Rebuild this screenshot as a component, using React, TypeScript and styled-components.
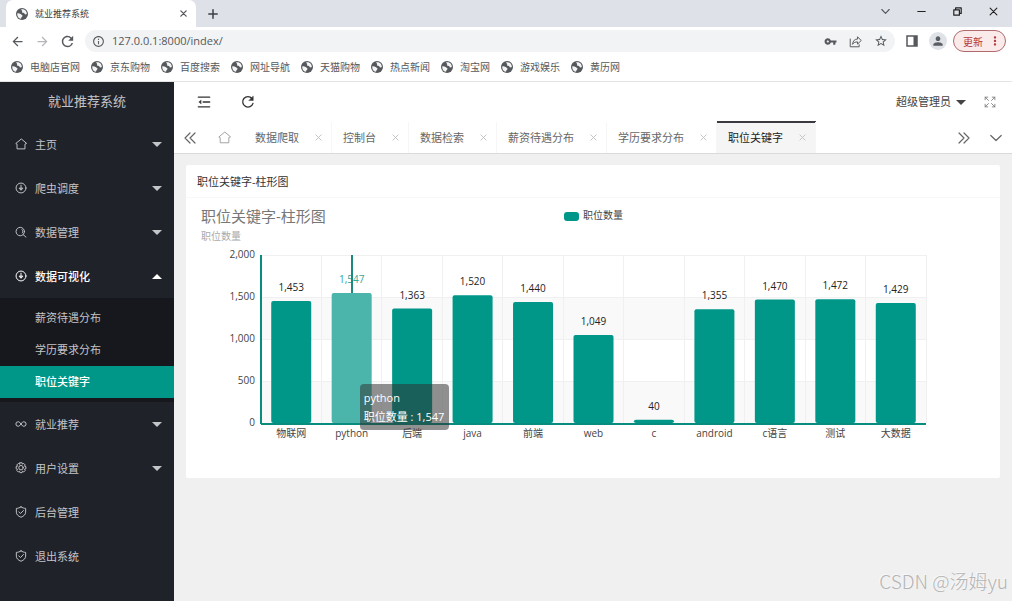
import React, { useLayoutEffect, useRef, useState } from "react";
import styled, { createGlobalStyle } from "styled-components";
import {
  MdArrowBack,
  MdArrowForward,
  MdInfoOutline,
  MdMoreVert,
  MdPerson,
  MdRefresh,
  MdStarBorder,
  MdVpnKey,
} from "react-icons/md";

const TEAL = "#009688";

const GlobalStyle = createGlobalStyle`
  *, *::before, *::after { box-sizing: border-box; }
  body {
    margin: 0;
    font-family: "Open Sans", "Noto Sans CJK SC", sans-serif;
    font-size: 11px;
    color: #333;
    background: #f0f0f0;
  }
  button, input {
    font: inherit;
    color: inherit;
    border: 0;
    padding: 0;
    margin: 0;
    background: none;
  }
  a { color: inherit; text-decoration: none; }
  ul { list-style: none; margin: 0; padding: 0; }
  h1, h2 { margin: 0; font-weight: 400; }
  svg { display: block; flex: none; }
`;

const Page = styled.div`
  position: relative;
  min-height: 100vh;
  display: flex;
  flex-direction: column;
`;

/* ---------- browser chrome ---------- */

const TabStrip = styled.div`
  height: 27px;
  display: flex;
  align-items: center;
  padding-left: 6px;
  background: #dee1e8;
`;

const BrowserTab = styled.div`
  width: 190px;
  height: 27px;
  display: flex;
  align-items: center;
  gap: 6px;
  padding: 0 7px 0 9px;
  border-radius: 7px 7px 0 0;
  background: #fff;
  font-size: 9px;
  color: #3c4043;
`;

const BrowserTabTitle = styled.span`
  flex: 1;
`;

const IconButton = styled.button<{ $w?: number; $color?: string }>`
  width: ${(p) => p.$w ?? 14}px;
  height: 100%;
  display: flex;
  align-items: center;
  justify-content: center;
  flex: none;
  color: ${(p) => p.$color ?? "#55585c"};
`;

const WindowControls = styled.div`
  height: 100%;
  display: flex;
  margin-left: auto;
  padding: 0 1px 4px 0;
`;

const Toolbar = styled.div`
  height: 28px;
  display: flex;
  align-items: center;
  gap: 11px;
  padding: 0 6px 0 10px;
  background: #fff;
`;

const AddressBar = styled.div`
  flex: 1;
  height: 22px;
  display: flex;
  align-items: center;
  gap: 12px;
  padding: 0 7px;
  border-radius: 11px;
  background: #f1f3f4;
`;

const AddressInput = styled.input`
  flex: 1;
  min-width: 0;
  margin-left: -5px;
  padding-bottom: 1px;
  font-size: 11px;
  color: #55585c;
  outline: none;
`;

const ProfileGroup = styled.div`
  display: flex;
  align-items: center;
  gap: 6px;
`;

const Avatar = styled.button`
  width: 18px;
  height: 18px;
  display: flex;
  align-items: center;
  justify-content: center;
  border-radius: 50%;
  background: #dfe2e6;
  color: #5a5d61;
`;

const UpdateButton = styled.button`
  width: 53px;
  height: 22px;
  display: flex;
  align-items: center;
  justify-content: space-between;
  padding: 0 3px 0 9px;
  border: 1px solid #b06a6e;
  border-radius: 11px;
  background: #fbeaea;
  color: #b3383b;
  font-size: 10px;
`;

const Bookmarks = styled.nav`
  height: 27px;
  display: flex;
  align-items: center;
  gap: 10px;
  padding: 0 10px 2px;
  border-bottom: 1px solid #e4e4e4;
  background: #fff;
`;

const Bookmark = styled.a`
  display: flex;
  align-items: center;
  gap: 6px;
  font-size: 10px;
  line-height: 14px;
  white-space: nowrap;
  color: #55585c;
`;

/* ---------- application shell ---------- */

const Shell = styled.div`
  flex: 1;
  display: flex;
`;

const Sidebar = styled.aside`
  width: 174px;
  flex: none;
  background: #20222a;
  color: #c4c5c9;
`;

const Brand = styled.h1`
  height: 40px;
  line-height: 39px;
  text-align: center;
  font-size: 13px;
`;

const MenuLink = styled.a<{ $open?: boolean }>`
  height: 44px;
  display: flex;
  align-items: center;
  gap: 8px;
  padding: 0 12px 0 15px;
  font-weight: ${(p) => (p.$open ? 500 : 400)};
  color: ${(p) => (p.$open ? "#fff" : "inherit")};
`;

const MenuText = styled.span`
  flex: 1;
`;

const Caret = styled.span<{ $up?: boolean }>`
  border: 5px solid transparent;
  border-top-color: ${(p) => (p.$up ? "transparent" : "currentColor")};
  border-bottom-color: ${(p) => (p.$up ? "currentColor" : "transparent")};
  ${(p) => (p.$up ? "border-top-width: 0;" : "border-bottom-width: 0;")}
`;

const SubMenu = styled.ul`
  padding: 4px 0;
  background: #17181d;
`;

const SubLink = styled.a<{ $active?: boolean }>`
  display: block;
  height: 32px;
  line-height: 32px;
  padding-left: 35px;
  font-weight: ${(p) => (p.$active ? 500 : 400)};
  color: ${(p) => (p.$active ? "#fff" : "inherit")};
  background: ${(p) => (p.$active ? TEAL : "transparent")};
`;

const Main = styled.main`
  flex: 1;
  min-width: 0;
`;

const TopBar = styled.header`
  height: 40px;
  display: flex;
  align-items: center;
  padding: 0 8px;
  background: #fff;
`;

const UserButton = styled.button`
  display: flex;
  align-items: center;
  gap: 5px;
  margin: 0 10px 0 auto;
  line-height: 16px;
  color: #444;
`;

const PageTabs = styled.nav`
  height: 32px;
  display: flex;
  border-bottom: 1px solid #dadada;
  background: #fff;
`;

const TabList = styled.ul`
  flex: 1;
  min-width: 0;
  display: flex;
`;

const PageTab = styled.li<{ $active?: boolean }>`
  height: 31px;
  display: flex;
  align-items: center;
  padding: 0 8px 1px 11px;
  white-space: nowrap;
  border-right: 1px solid #f6f6f6;
  color: ${(p) => (p.$active ? "#222" : "#666")};
  background: ${(p) => (p.$active ? "#f5f5f5" : "transparent")};
  box-shadow: ${(p) => (p.$active ? "inset 0 1px #3a3a40, 0 -1px #3a3a40" : "none")};
`;

const TabClose = styled.button`
  width: 10px;
  height: 10px;
  margin-left: 14px;
  display: flex;
  align-items: center;
  justify-content: center;
  color: #c4c4c4;
`;

const Card = styled.section`
  margin: 11px 12px;
  background: #fff;
  border-radius: 2px;
`;

const CardTitle = styled.h2`
  height: 33px;
  line-height: 33px;
  padding-left: 11px;
  font-size: 11px;
  color: #333;
  border-bottom: 1px solid #f8f8f8;
`;

const ChartBox = styled.div`
  position: relative;
  height: 280px;
`;

const Tooltip = styled.div`
  position: absolute;
  padding: 4px 5px 4px 4px;
  border-radius: 4px;
  background: rgba(50, 50, 50, 0.53);
  color: #fff;
  font-size: 11px;
  line-height: 19px;
  white-space: nowrap;
`;

const Watermark = styled.div`
  position: absolute;
  right: 4px;
  bottom: 6px;
  font-family: "Noto Sans CJK SC", sans-serif;
  font-size: 19px;
  font-weight: 300;
  line-height: 28px;
  color: #b4b4b4;
  text-shadow: -1px -1px #f8f8f8;
`;

/* ---------- icons ---------- */

type Glyph = "home" | "down" | "search" | "link" | "gear" | "shield";

function Stroke({
  size = 12,
  box = 16,
  w = 1.3,
  children,
}: {
  size?: number;
  box?: number;
  w?: number;
  children: React.ReactNode;
}) {
  return (
    <svg
      width={size}
      height={size}
      viewBox={`0 0 ${box} ${box}`}
      fill="none"
      stroke="currentColor"
      strokeWidth={w}
      strokeLinecap="round"
      strokeLinejoin="round"
      aria-hidden="true"
    >
      {children}
    </svg>
  );
}

const glyphs: Record<Glyph, React.ReactNode> = {
  home: <path d="M8 1.600 1 7.400l1.700.8v6.300h10.600V8.200l1.700-.8z" />,
  down: (
    <>
      <circle cx="8" cy="8" r="6.6" />
      <path d="M8 4.2v6M5.8 8.6 8 11l2.2-2.4z" />
    </>
  ),
  search: (
    <>
      <circle cx="7" cy="7.4" r="5.6" />
      <path d="m11 11.6 3.6 3.2M9.4 4.8c1.4 1.4 1.3 3.2.4 4.4" />
    </>
  ),
  link: (
    <path d="M8 8C6.600 5.800 5.600 5 4.200 5a3 3 0 0 0 0 6C5.600 11 6.600 10.200 8 8s2.400-3 3.800-3a3 3 0 0 1 0 6C10.400 11 9.400 10.200 8 8z" />
  ),
  gear: (
    <>
      <path d="M6.600 1h2.800l.5 1.800 1.700-.9 2 2-.9 1.700 1.800.6v2.800l-1.800.6.9 1.700-2 2-1.700-.9-.5 1.800H6.600l-.5-1.800-1.700.9-2-2 .9-1.700L1.500 9V6.200l1.800-.6-.9-1.700 2-2 1.700.9z" />
      <circle cx="8" cy="7.600" r="3" />
    </>
  ),
  shield: <path d="M8 1.200c2 1.300 4 1.900 6.200 2v5c0 3.200-2.600 5.400-6.200 6.800-3.600-1.400-6.200-3.600-6.200-6.800v-5c2.200-.1 4.200-.7 6.200-2zM5 7.800l2.300 2.300L11.300 6" />,
};

const GlobeGlyph = () => (
  <svg width="14" height="14" viewBox="0 0 14 14" aria-hidden="true">
    <circle cx="7" cy="7" r="6" fill="#55585c" />
    <path d="M6.200 2.300c1.700-.5 3.700.2 4.700 1.600.7.9 1 2 .9 3.100-.9.700-2 .4-2.400-.5-.6-.6-1.700-.2-2.200-.9-.5-.8.300-1.300-.2-1.900-.3-.4-1-.7-.8-1.400z" fill="#f4f4f4" />
    <path d="M2.200 6.400c1-.2 2.600 0 3.400.7.7.7 1.800.8 1.900 1.700.1.900-1 1-1.100 1.800-.1.500-.2 1-.7 1.100C3.500 11.200 2 9 2.200 6.400z" fill="#f4f4f4" />
  </svg>
);

const CloseGlyph = ({ size = 7, w = 1.4 }: { size?: number; w?: number }) => (
  <Stroke size={size} box={8} w={w}>
    <path d="m1 1 6 6M7 1 1 7" />
  </Stroke>
);

const ShareGlyph = () => (
  <Stroke size={13} w={1.2}>
    <path d="M1.500 5v9.500h11V12M4.500 11c.4-4 2.500-6 6-6V2.200L15 6.800l-4.500 4.400V8.500c-2.800 0-4.600.7-6 2.500z" />
  </Stroke>
);

const SidePanelGlyph = () => (
  <svg width="12" height="12" viewBox="0 0 12 12" aria-hidden="true">
    <path d="M1 1h10v10H1z" fill="none" stroke="currentColor" strokeWidth="1.500" />
    <path d="M7.500 1H11v10H7.500z" fill="currentColor" />
  </svg>
);

const FoldGlyph = () => (
  <Stroke size={14} w={1.500}>
    <path d="M1.500 2.500h13M7 8h7.500M1.500 13.500h13" />
    <path d="M4.500 6 2 8l2.500 2z" fill="currentColor" strokeWidth="0.500" />
  </Stroke>
);

const ReloadGlyph = () => (
  <Stroke size={14} w={1.500}>
    <path d="M13.700 9.500A6 6 0 1 1 12.600 4" />
    <path d="M14 1.500v4.800H9.200z" fill="currentColor" strokeWidth="0.500" />
  </Stroke>
);

const FullscreenGlyph = () => (
  <Stroke size={12} w={1.100}>
    <path d="M1.500 5V1.500H5M1.500 1.500 6 6M11 1.500h3.500V5M14.500 1.500 10 6M1.500 11v3.500H5M1.500 14.500 6 10M14.500 11v3.500H11M14.500 14.500 10 10" />
  </Stroke>
);

/* ---------- chart ---------- */

const series = [
  { name: "物联网", value: 1453 },
  { name: "python", value: 1547 },
  { name: "后端", value: 1363 },
  { name: "java", value: 1520 },
  { name: "前端", value: 1440 },
  { name: "web", value: 1049 },
  { name: "c", value: 40 },
  { name: "android", value: 1355 },
  { name: "c语言", value: 1470 },
  { name: "测试", value: 1472 },
  { name: "大数据", value: 1429 },
];

const fmt = (n: number) => n.toLocaleString("en-US");

function BarChart() {
  const ref = useRef<HTMLDivElement>(null);
  const [width, setWidth] = useState(814);

  useLayoutEffect(() => {
    const node = ref.current;
    if (!node) return;
    const measure = () => setWidth(node.clientWidth);
    measure();
    const observer = new ResizeObserver(measure);
    observer.observe(node);
    return () => observer.disconnect();
  }, []);

  const left = 75;
  const right = width - 74;
  const top = 57;
  const bottom = 225;
  const band = (right - left) / series.length;
  const barWidth = Math.round(band * 0.66);
  const y = (v: number) => bottom - (v / 2000) * (bottom - top);
  const active = 1;
  const pointerX = left + band * (active + 0.5);

  return (
    <ChartBox ref={ref}>
      <svg width={width} height="280" role="img" aria-label="职位关键字-柱形图" fontSize="10" fill="#444">
        <text x="15" y="24" fontSize="15" fill="#777">职位关键字-柱形图</text>
        <text x="15" y="42" fill="#aaa">职位数量</text>
        <rect x={width / 2 - 29} y="14" width="15" height="9" rx="3" fill={TEAL} />
        <text x={width / 2 - 10} y="21">职位数量</text>

        {[1000, 0].map((v) => (
          <rect key={v} x={left} y={y(v + 500)} width={right - left} height={y(v) - y(v + 500)} fill="#f9f9f9" />
        ))}
        <g stroke="#f0f0f0" shapeRendering="crispEdges">
          {[500, 1000, 1500, 2000].map((v) => (
            <line key={v} x1={left} x2={right} y1={y(v)} y2={y(v)} />
          ))}
          {series.map((s, i) => (
            <line key={s.name} x1={left + band * (i + 1)} x2={left + band * (i + 1)} y1={top} y2={bottom} />
          ))}
        </g>
        <g textAnchor="end">
          {[0, 500, 1000, 1500, 2000].map((v) => (
            <text key={v} x={left - 6} y={y(v) + 3}>{fmt(v)}</text>
          ))}
        </g>
        <g stroke="#078c7d" strokeWidth="2" shapeRendering="crispEdges">
          <line x1={left} x2={left} y1={top} y2={bottom + 1} />
          <line x1={left} x2={right} y1={bottom + 1} y2={bottom + 1} />
        </g>
        <g textAnchor="middle">
          {series.map((s, i) => {
            const cx = left + band * (i + 0.5);
            return (
              <g key={s.name}>
                <rect
                  x={cx - barWidth / 2}
                  y={y(s.value)}
                  width={barWidth}
                  height={bottom - y(s.value)}
                  rx="2"
                  fill={i === active ? "#4bb5ac" : TEAL}
                />
                <text x={cx} y={y(s.value) - 10} fill={i === active ? "#35a79b" : "#222"}>{fmt(s.value)}</text>
                <text x={cx} y="239">{s.name}</text>
              </g>
            );
          })}
        </g>
        <line
          x1={pointerX}
          x2={pointerX}
          y1={top}
          y2={y(series[active].value)}
          stroke="#1b8a7d"
          strokeWidth="2"
          shapeRendering="crispEdges"
        />
      </svg>
      <Tooltip style={{ left: pointerX + 8, top: 186 }}>
        <div>{series[active].name}</div>
        <div>职位数量 : {fmt(series[active].value)}</div>
      </Tooltip>
    </ChartBox>
  );
}

/* ---------- page ---------- */

const bookmarks = ["电脑店官网", "京东购物", "百度搜索", "网址导航", "天猫购物", "热点新闻", "淘宝网", "游戏娱乐", "黄历网"];

const menu: { text: string; icon: Glyph; caret?: boolean; children?: string[] }[] = [
  { text: "主页", icon: "home", caret: true },
  { text: "爬虫调度", icon: "down", caret: true },
  { text: "数据管理", icon: "search", caret: true },
  { text: "数据可视化", icon: "down", caret: true, children: ["薪资待遇分布", "学历要求分布", "职位关键字"] },
  { text: "就业推荐", icon: "link", caret: true },
  { text: "用户设置", icon: "gear", caret: true },
  { text: "后台管理", icon: "shield" },
  { text: "退出系统", icon: "shield" },
];

const pageTabs = ["数据爬取", "控制台", "数据检索", "薪资待遇分布", "学历要求分布", "职位关键字"];
const current = "职位关键字";

export default function App() {
  return (
    <Page>
      <GlobalStyle />
      <TabStrip>
        <BrowserTab>
          <GlobeGlyph />
          <BrowserTabTitle>就业推荐系统</BrowserTabTitle>
          <IconButton aria-label="关闭标签页" $w={12}><CloseGlyph w={1.500} /></IconButton>
        </BrowserTab>
        <IconButton aria-label="新标签页" $w={34} $color="#3c4043">
          <Stroke size={10} box={10} w={1.500}><path d="M5 .8v8.400M.8 5h8.400" /></Stroke>
        </IconButton>
        <WindowControls>
          <IconButton aria-label="搜索标签页" $w={36}>
            <Stroke size={9} box={9} w={1.100}><path d="m.8 2.500 3.700 3.800 3.700-3.800" /></Stroke>
          </IconButton>
          <IconButton aria-label="最小化" $w={36} $color="#222">
            <Stroke size={9} box={9} w={1.200}><path d="M.8 4.500h7.400" /></Stroke>
          </IconButton>
          <IconButton aria-label="还原" $w={36} $color="#222">
            <Stroke size={9} box={9} w={1.200}><path d="M.8 2.800h5.600v5.400H.8zM2.600 2.600V.8h5.600v5.600H6.600" /></Stroke>
          </IconButton>
          <IconButton aria-label="关闭" $w={36} $color="#222"><CloseGlyph size={9} w={1} /></IconButton>
        </WindowControls>
      </TabStrip>

      <Toolbar>
        <IconButton aria-label="后退"><MdArrowBack size={15} /></IconButton>
        <IconButton aria-label="前进" $color="#b4b6b9"><MdArrowForward size={15} /></IconButton>
        <IconButton aria-label="重新加载"><MdRefresh size={17} /></IconButton>
        <AddressBar>
          <MdInfoOutline size={13} color="#5a5d61" />
          <AddressInput aria-label="地址" defaultValue="127.0.0.1:8000/index/" />
          <IconButton aria-label="密码"><MdVpnKey size={13} /></IconButton>
          <IconButton aria-label="分享" $w={13}><ShareGlyph /></IconButton>
          <IconButton aria-label="收藏"><MdStarBorder size={14} /></IconButton>
        </AddressBar>
        <IconButton aria-label="侧边栏" $w={12}><SidePanelGlyph /></IconButton>
        <ProfileGroup>
          <Avatar aria-label="用户"><MdPerson size={14} /></Avatar>
          <UpdateButton>更新<MdMoreVert size={14} /></UpdateButton>
        </ProfileGroup>
      </Toolbar>

      <Bookmarks aria-label="书签">
        {bookmarks.map((name) => (
          <Bookmark key={name} href="#">
            <GlobeGlyph />
            {name}
          </Bookmark>
        ))}
      </Bookmarks>

      <Shell>
        <Sidebar>
          <Brand>就业推荐系统</Brand>
          <ul>
            {menu.map((item) => (
              <li key={item.text}>
                <MenuLink href="#" $open={!!item.children}>
                  <Stroke>{glyphs[item.icon]}</Stroke>
                  <MenuText>{item.text}</MenuText>
                  {item.caret && <Caret $up={!!item.children} />}
                </MenuLink>
                {item.children && (
                  <SubMenu>
                    {item.children.map((name) => (
                      <li key={name}>
                        <SubLink href="#" $active={name === current}>{name}</SubLink>
                      </li>
                    ))}
                  </SubMenu>
                )}
              </li>
            ))}
          </ul>
        </Sidebar>

        <Main>
          <TopBar>
            <IconButton aria-label="收起菜单" $w={44} $color="#333"><FoldGlyph /></IconButton>
            <IconButton aria-label="刷新" $w={44} $color="#333"><ReloadGlyph /></IconButton>
            <UserButton>超级管理员<Caret /></UserButton>
            <IconButton aria-label="全屏" $w={28} $color="#777"><FullscreenGlyph /></IconButton>
          </TopBar>

          <PageTabs>
            <IconButton aria-label="向左" $w={31} $color="#666">
              <Stroke size={12} box={12} w={1.200}><path d="M6 1 1 6l5 5M11 1 6 6l5 5" /></Stroke>
            </IconButton>
            <IconButton aria-label="主页" $w={39} $color="#999">
              <Stroke size={13} w={1.100}>{glyphs.home}</Stroke>
            </IconButton>
            <TabList>
              {pageTabs.map((name) => (
                <PageTab key={name} $active={name === current}>
                  <a href="#">{name}</a>
                  <TabClose aria-label={`关闭${name}`}><CloseGlyph w={1.100} /></TabClose>
                </PageTab>
              ))}
            </TabList>
            <IconButton aria-label="向右" $w={32} $color="#666">
              <Stroke size={12} box={12} w={1.200}><path d="m1 1 5 5-5 5M6 1l5 5-5 5" /></Stroke>
            </IconButton>
            <IconButton aria-label="更多" $w={32} $color="#666">
              <Stroke size={12} box={12} w={1.200}><path d="m.8 3.500 5.200 5 5.200-5" /></Stroke>
            </IconButton>
          </PageTabs>

          <Card>
            <CardTitle>职位关键字-柱形图</CardTitle>
            <BarChart />
          </Card>
        </Main>
      </Shell>

      <Watermark>CSDN @汤姆yu</Watermark>
    </Page>
  );
}
